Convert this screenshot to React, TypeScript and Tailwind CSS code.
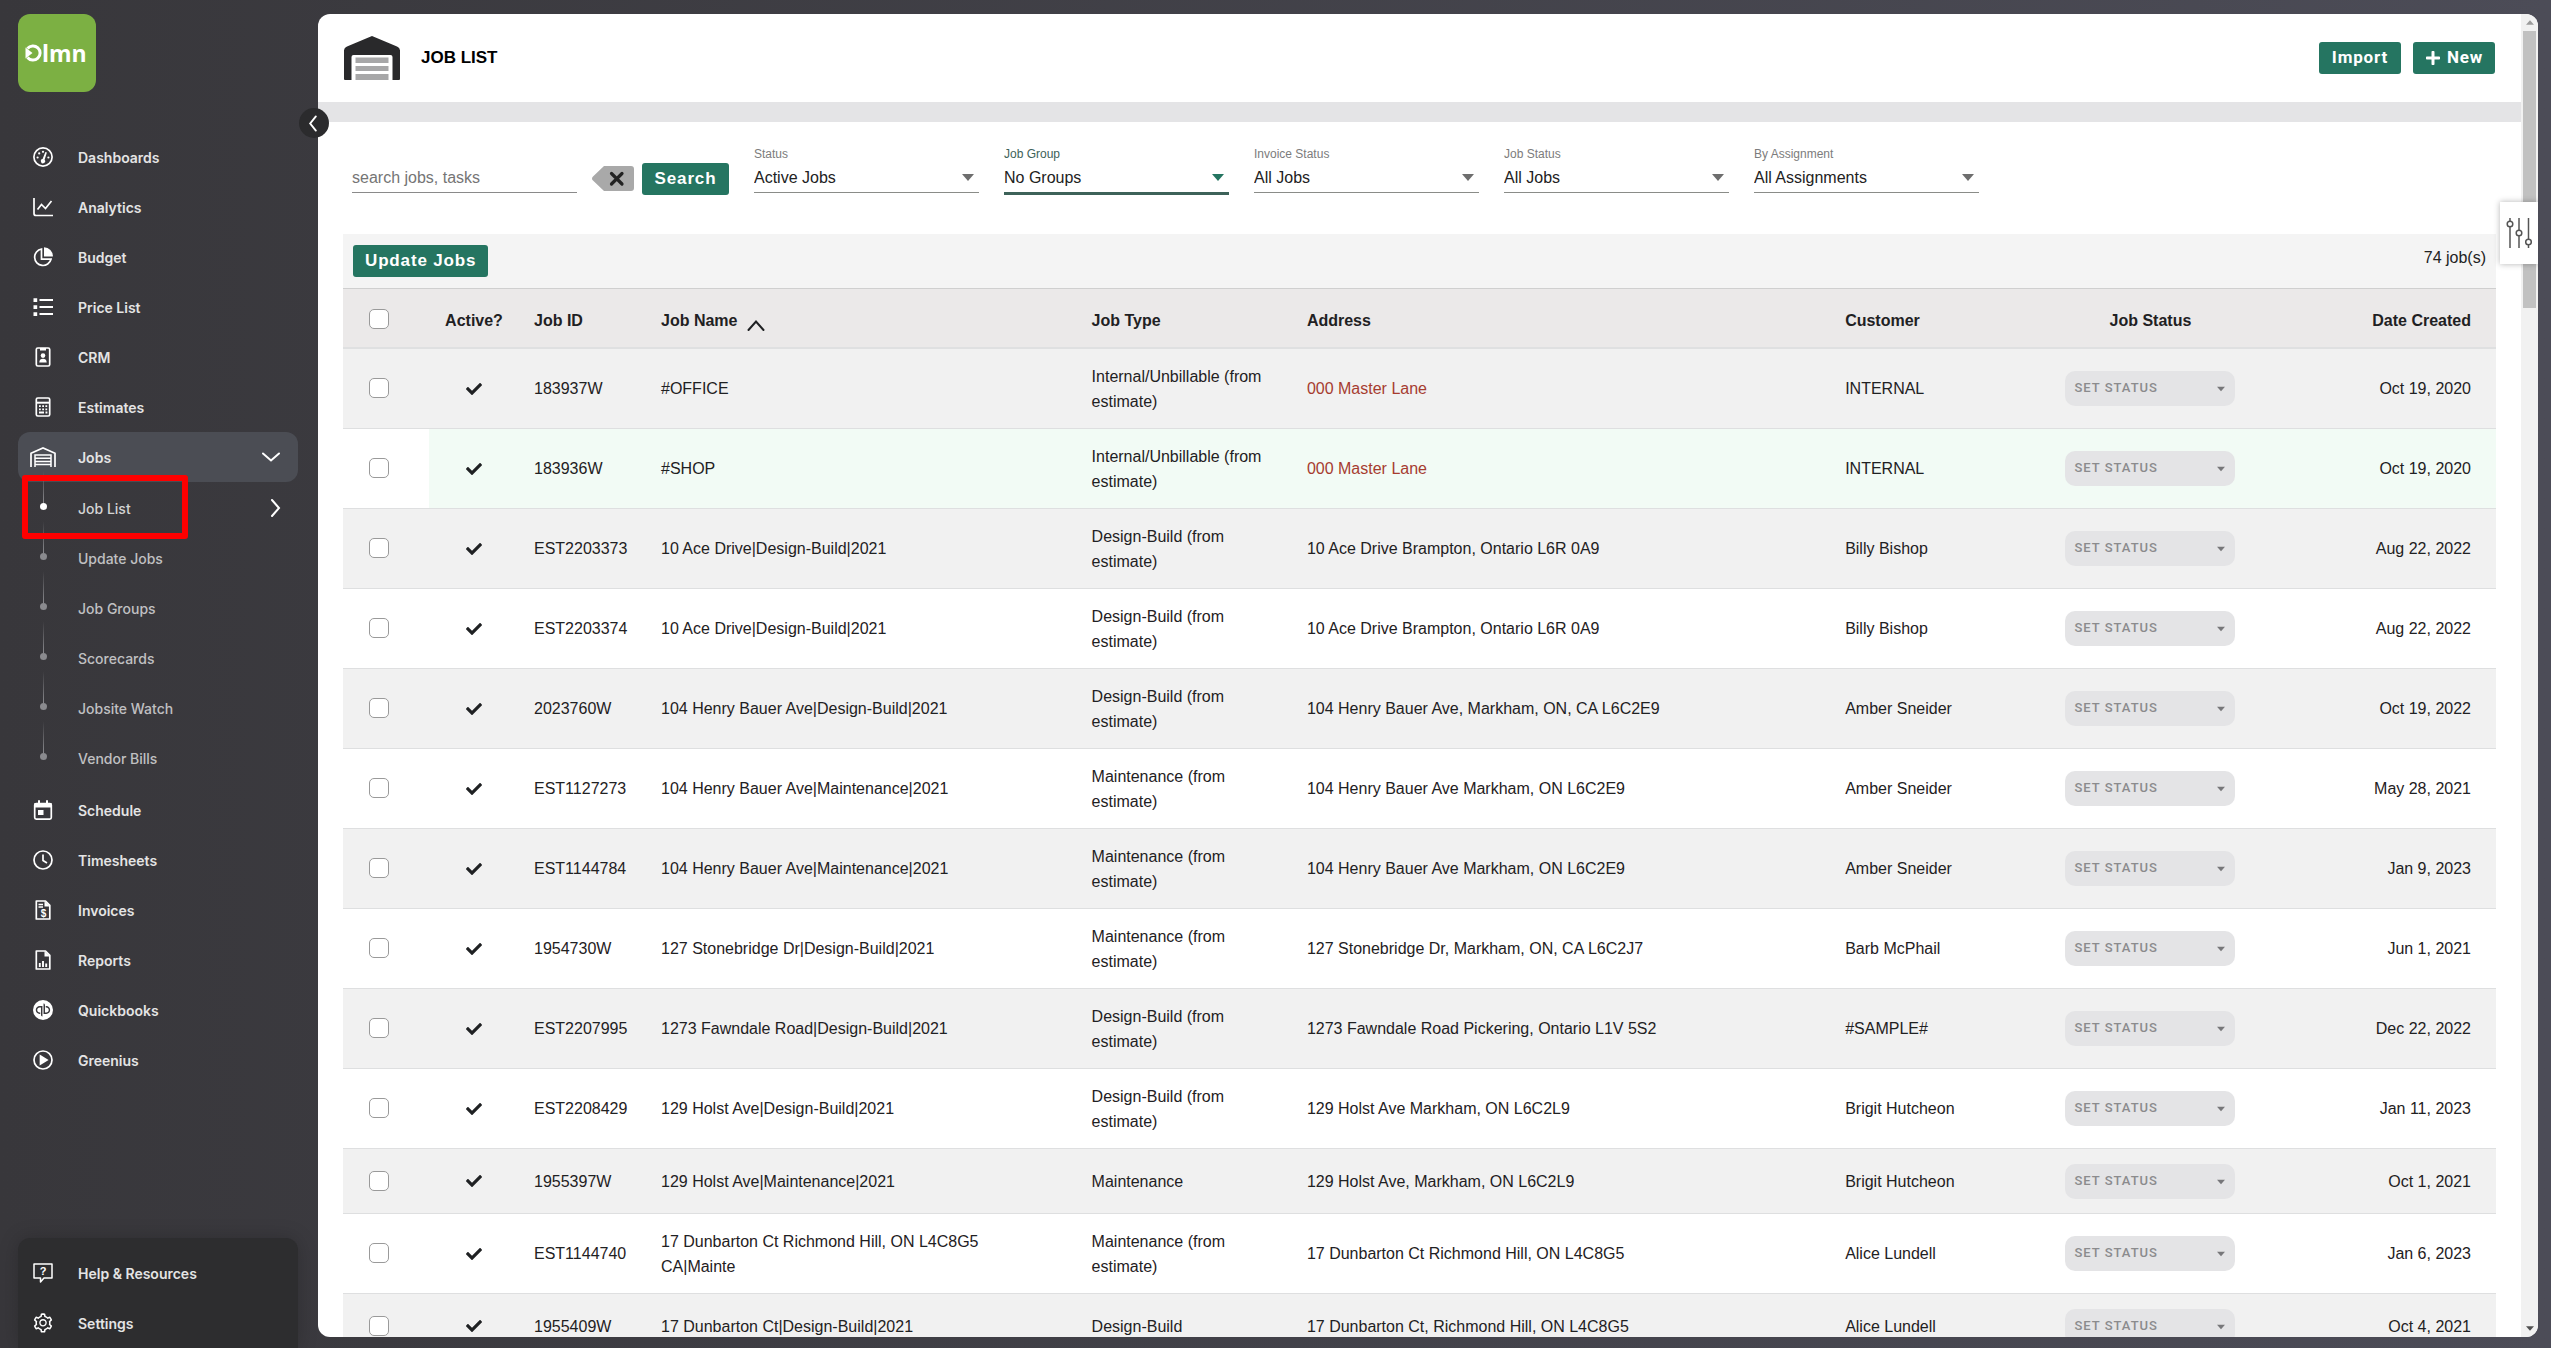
import React, { useState } from 'react';
import { SiQuickbooks } from 'react-icons/si';
import { AiOutlineSetting } from 'react-icons/ai';
import { FaCheck, FaPlus } from 'react-icons/fa';

interface Job {
  id: string;
  name: string;
  type: string;
  address: string;
  customer: string;
  created: string;
  missingAddress?: boolean;
}

const INTERNAL = 'Internal/Unbillable (from estimate)';
const DESIGN = 'Design-Build (from estimate)';
const MAINTENANCE = 'Maintenance (from estimate)';

const jobs: Job[] = [
  { id: '183937W', name: '#OFFICE', type: INTERNAL, address: '000 Master Lane', customer: 'INTERNAL', created: 'Oct 19, 2020', missingAddress: true },
  { id: '183936W', name: '#SHOP', type: INTERNAL, address: '000 Master Lane', customer: 'INTERNAL', created: 'Oct 19, 2020', missingAddress: true },
  { id: 'EST2203373', name: '10 Ace Drive|Design-Build|2021', type: DESIGN, address: '10 Ace Drive Brampton, Ontario L6R 0A9', customer: 'Billy Bishop', created: 'Aug 22, 2022' },
  { id: 'EST2203374', name: '10 Ace Drive|Design-Build|2021', type: DESIGN, address: '10 Ace Drive Brampton, Ontario L6R 0A9', customer: 'Billy Bishop', created: 'Aug 22, 2022' },
  { id: '2023760W', name: '104 Henry Bauer Ave|Design-Build|2021', type: DESIGN, address: '104 Henry Bauer Ave, Markham, ON, CA L6C2E9', customer: 'Amber Sneider', created: 'Oct 19, 2022' },
  { id: 'EST1127273', name: '104 Henry Bauer Ave|Maintenance|2021', type: MAINTENANCE, address: '104 Henry Bauer Ave Markham, ON L6C2E9', customer: 'Amber Sneider', created: 'May 28, 2021' },
  { id: 'EST1144784', name: '104 Henry Bauer Ave|Maintenance|2021', type: MAINTENANCE, address: '104 Henry Bauer Ave Markham, ON L6C2E9', customer: 'Amber Sneider', created: 'Jan 9, 2023' },
  { id: '1954730W', name: '127 Stonebridge Dr|Design-Build|2021', type: MAINTENANCE, address: '127 Stonebridge Dr, Markham, ON, CA L6C2J7', customer: 'Barb McPhail', created: 'Jun 1, 2021' },
  { id: 'EST2207995', name: '1273 Fawndale Road|Design-Build|2021', type: DESIGN, address: '1273 Fawndale Road Pickering, Ontario L1V 5S2', customer: '#SAMPLE#', created: 'Dec 22, 2022' },
  { id: 'EST2208429', name: '129 Holst Ave|Design-Build|2021', type: DESIGN, address: '129 Holst Ave Markham, ON L6C2L9', customer: 'Brigit Hutcheon', created: 'Jan 11, 2023' },
  { id: '1955397W', name: '129 Holst Ave|Maintenance|2021', type: 'Maintenance', address: '129 Holst Ave, Markham, ON L6C2L9', customer: 'Brigit Hutcheon', created: 'Oct 1, 2021' },
  { id: 'EST1144740', name: '17 Dunbarton Ct Richmond Hill, ON L4C8G5 CA|Mainte', type: MAINTENANCE, address: '17 Dunbarton Ct Richmond Hill, ON L4C8G5', customer: 'Alice Lundell', created: 'Jan 6, 2023' },
  { id: '1955409W', name: '17 Dunbarton Ct|Design-Build|2021', type: 'Design-Build', address: '17 Dunbarton Ct, Richmond Hill, ON L4C8G5', customer: 'Alice Lundell', created: 'Oct 4, 2021' },
];

const filters = [
  { id: 'status', label: 'Status', value: 'Active Jobs' },
  { id: 'group', label: 'Job Group', value: 'No Groups', focused: true },
  { id: 'invoice', label: 'Invoice Status', value: 'All Jobs' },
  { id: 'job-status', label: 'Job Status', value: 'All Jobs' },
  { id: 'assignment', label: 'By Assignment', value: 'All Assignments' },
];

const Svg = ({ children, className = 'size-5' }: { children: React.ReactNode; className?: string }) => (
  <svg viewBox="0 0 20 20" className={className} fill="none" stroke="currentColor" strokeWidth="1.7" aria-hidden="true">
    {children}
  </svg>
);

const GaugeIcon = () => (
  <Svg>
    <circle cx="10" cy="10" r="9.1" />
    <g fill="currentColor" stroke="none">
      <circle cx="4.6" cy="10.5" r="1.1" />
      <circle cx="6.2" cy="6.4" r="1.1" />
      <circle cx="10" cy="4.8" r="1.1" />
      <circle cx="15.4" cy="10.5" r="1.1" />
      <path d="M12.4 5l1.5.6-2.3 7.2a2.1 2.1 0 1 1-2-.7z" />
    </g>
  </Svg>
);

const AnalyticsIcon = () => (
  <Svg>
    <path d="M1 1v15.5a2 2 0 0 0 2 2h17" />
    <path d="M4.5 12.5l4-5 4 4 6-7.5" />
  </Svg>
);

const BudgetIcon = () => (
  <Svg>
    <path d="M8.5 2A8.3 8.3 0 1 0 18 12.200H8.500z" />
    <path d="M11 .3a9 9 0 0 1 8.900 9.200H11z" fill="currentColor" stroke="none" />
  </Svg>
);

const ListIcon = () => (
  <Svg>
    <path d="M6.500 3H20M6.500 10H20M6.500 17H20" strokeWidth="2" />
    <path d="M.5 1.200h3.700v3.700H.5zM.5 8.200h3.700v3.700H.5zM.5 15.200h3.700v3.700H.5z" fill="currentColor" stroke="none" />
  </Svg>
);

const CrmIcon = () => (
  <Svg>
    <rect x="3.300" y="1" width="13.400" height="18" rx="1.500" />
    <path d="M7 1h6v2.500H7zM6.300 15.500c0-2.700 1.700-3.700 3.700-3.700s3.700 1 3.700 3.700z" fill="currentColor" stroke="none" />
    <circle cx="10" cy="8.600" r="2.300" fill="currentColor" stroke="none" />
  </Svg>
);

const CalculatorIcon = () => (
  <Svg>
    <rect x="3.300" y="1" width="13.400" height="18" rx="1.500" />
    <path d="M3 5.700h14" strokeWidth="2" />
    <path d="M6 9.200h8.500M6 12.300h8.500" strokeDasharray="1.800 1.400" strokeWidth="1.800" />
    <path d="M6 15.500h5M12.500 15.500h1.900" strokeWidth="1.800" />
  </Svg>
);

const GarageIcon = () => (
  <svg viewBox="0 0 26 20" className="h-5 w-[26px]" fill="none" stroke="currentColor" strokeWidth="1.7" aria-hidden="true">
    <path d="M1 20V6.300L13 1l12 5.300V20" />
    <path d="M5 20V8h16v12M5 11.300h16M5 14.400h16M5 17.500h16" strokeWidth="1.5" />
  </svg>
);

const ScheduleIcon = () => (
  <Svg>
    <rect x="1.700" y="3.500" width="16.600" height="15.600" rx="1.500" />
    <path d="M1.500 3h17v4.500h-17zM5 .3h2V3H5zM13 .3h2V3h-2zM5 10h5.500v5H5z" fill="currentColor" stroke="none" />
  </Svg>
);

const ClockIcon = () => (
  <Svg>
    <circle cx="10" cy="10" r="9" />
    <path d="M10 4.500V10.500l4 2.500" />
  </Svg>
);

const InvoiceIcon = () => (
  <Svg>
    <path d="M3.300 1h9.200l4.300 4.300V19H3.300zM5.500 4.500h4.500M5.500 7h4.500" strokeLinejoin="round" />
    <path d="M11.500 1l5.500 5.500h-5.500z" fill="currentColor" stroke="none" />
    <text x="10.500" y="16.800" textAnchor="middle" fontSize="10" fontWeight="700" fontFamily="Liberation Sans, sans-serif" fill="currentColor" stroke="none">$</text>
  </Svg>
);

const ReportIcon = () => (
  <Svg>
    <path d="M3.300 1h9.200l4.300 4.300V19H3.300z" strokeLinejoin="round" />
    <path d="M11.500 1l5.500 5.500h-5.500z" fill="currentColor" stroke="none" />
    <path d="M6.800 17v-4M10 17v-6M13.200 17v-3.500" strokeWidth="1.9" />
  </Svg>
);

const PlayIcon = () => (
  <Svg>
    <circle cx="10" cy="10" r="9" />
    <path d="M7.500 6l6.500 4-6.500 4z" fill="currentColor" />
  </Svg>
);

const HelpIcon = () => (
  <Svg>
    <path d="M1 1h18v14h-8l-3.500 4v-4H1z" strokeLinejoin="round" strokeWidth="1.5" />
    <text x="10" y="12" textAnchor="middle" fontSize="11" fontWeight="700" fontFamily="Liberation Sans, sans-serif" fill="currentColor" stroke="none">?</text>
  </Svg>
);

const Chevron = ({ d, className }: { d: string; className: string }) => (
  <svg viewBox="0 0 18 18" className={className} fill="none" stroke="currentColor" strokeWidth="2" aria-hidden="true">
    <path d={d} strokeLinecap="round" />
  </svg>
);

const Caret = ({ className }: { className: string }) => (
  <svg viewBox="0 0 12 7" className={className} fill="currentColor" aria-hidden="true">
    <path d="M0 0h12L6 7z" />
  </svg>
);

const NavItem = ({ icon, label }: { icon: React.ReactNode; label: string }) => (
  <a href="#" className="flex h-[50px] items-center text-sm font-semibold text-[#e4e4e4]">
    <span className="flex w-[50px] justify-center text-white">{icon}</span>
    <span className="ml-[10px] pt-0.5">{label}</span>
  </a>
);

const SubItem = ({ label, active }: { label: string; active?: boolean }) => (
  <a href="#" className={`flex h-[50px] items-center text-sm font-medium ${active ? 'text-[#d4d4d4]' : 'text-[#c0c0c2]'}`}>
    <span className="flex h-full w-[50px] flex-col items-center pb-[23px]">
      <span className="-mt-3 w-px flex-1 bg-linear-to-b from-transparent to-[#8a8a8e]" />
      <span className={`size-[7px] rounded-full ${active ? 'bg-white' : 'bg-[#8a8a8e]'}`} />
    </span>
    <span className="ml-[10px] flex-1 pt-0.5">{label}</span>
    {active && <Chevron d="M6 1l7 8-7 8" className="mr-[14px] size-[18px] text-white" />}
  </a>
);

const Sidebar = ({ onCollapse }: { onCollapse: () => void }) => (
  <aside className="relative flex w-[318px] shrink-0 flex-col pl-[18px] pr-5 pt-[14px] font-[Inter,sans-serif]">
    <a href="#" aria-label="Home" className="flex size-[78px] items-center justify-center rounded-xl bg-[#7cb043] text-white">
      <svg viewBox="0 -10 70 44" className="h-11 w-[70px] overflow-visible" aria-hidden="true">
        <path d="M5.500 7.500A7.100 7.100 0 1 1 5.500 16.500" fill="none" stroke="#fff" strokeWidth="3" />
        <path d="M3.500 6.500l7 5.500-7 5.500z" fill="#fff" />
        <text x="20" y="21" fontFamily="Open Sans, sans-serif" fontWeight="700" fontSize="23" fill="#fff">lmn</text>
      </svg>
    </a>
    <button
      type="button"
      onClick={onCollapse}
      aria-label="Collapse menu"
      className="absolute right-[-11px] top-[108px] z-10 flex size-[30px] items-center justify-center rounded-full bg-[#2b2b2d] text-white"
    >
      <Chevron d="M11.500 1.500l-6 7.500 6 7.500" className="mr-0.5 size-[17px]" />
    </button>
    <nav className="mt-10">
      <NavItem icon={<GaugeIcon />} label="Dashboards" />
      <NavItem icon={<AnalyticsIcon />} label="Analytics" />
      <NavItem icon={<BudgetIcon />} label="Budget" />
      <NavItem icon={<ListIcon />} label="Price List" />
      <NavItem icon={<CrmIcon />} label="CRM" />
      <NavItem icon={<CalculatorIcon />} label="Estimates" />
      <div className="flex items-center justify-between rounded-xl bg-[#4b4d54] pr-[18px] text-white">
        <NavItem icon={<GarageIcon />} label="Jobs" />
        <Chevron d="M1 5.500l8 7 8-7" className="size-[18px]" />
      </div>
      <div className="relative pb-0.5 pt-px">
        <SubItem label="Job List" active />
        <SubItem label="Update Jobs" />
        <SubItem label="Job Groups" />
        <SubItem label="Scorecards" />
        <SubItem label="Jobsite Watch" />
        <SubItem label="Vendor Bills" />
        <div className="pointer-events-none absolute left-1 top-[-7px] h-16 w-[166px] rounded-[3px] border-[6px] border-[#fe0000]" />
      </div>
      <NavItem icon={<ScheduleIcon />} label="Schedule" />
      <NavItem icon={<ClockIcon />} label="Timesheets" />
      <NavItem icon={<InvoiceIcon />} label="Invoices" />
      <NavItem icon={<ReportIcon />} label="Reports" />
      <NavItem icon={<SiQuickbooks className="size-5" />} label="Quickbooks" />
      <NavItem icon={<PlayIcon />} label="Greenius" />
    </nav>
    <div className="mt-auto rounded-t-xl bg-[#2d2d2f] pt-[10px] shadow-[0_0_20px_rgba(0,0,0,0.2)]">
      <NavItem icon={<HelpIcon />} label="Help & Resources" />
      <NavItem icon={<AiOutlineSetting className="size-[22px]" />} label="Settings" />
    </div>
  </aside>
);

const GreenButton = ({ children, className = 'px-3' }: { children: React.ReactNode; className?: string }) => (
  <button type="button" className={`flex h-8 items-center justify-center gap-1.5 rounded-[3px] bg-[#257561] text-[17px] font-bold tracking-wider text-white ${className}`}>
    {children}
  </button>
);

const Checkbox = ({ label }: { label: string }) => (
  <input type="checkbox" aria-label={label} className="block size-5 appearance-none rounded-[5px] border border-[#9a9a9a] bg-white checked:bg-[#257561]" />
);

const FilterSelect = ({ id, label, value, focused }: { id: string; label: string; value: string; focused?: boolean }) => (
  <div className="w-[225px]">
    <label htmlFor={id} className={`block text-xs leading-4 ${focused ? 'text-[#3d6259]' : 'text-[#7c7c7c]'}`}>
      {label}
    </label>
    <div className={`relative flex items-start ${focused ? 'h-[33px] border-b-3 border-[#3d6259]' : 'h-[31px] border-b border-[#8a8c88]'}`}>
      <select id={id} className="h-8 w-full shrink-0 appearance-none bg-transparent text-[#222]">
        <option>{value}</option>
      </select>
      <Caret className={`pointer-events-none absolute right-[5px] top-3 h-[7px] w-3 ${focused ? 'text-[#257561]' : 'text-[#6e6e6e]'}`} />
    </div>
  </div>
);

const JobRow = ({ job, highlighted, striped }: { job: Job; highlighted: boolean; striped: boolean }) => {
  const cell = `pl-[15px] pt-[15px] pb-[14px] leading-[25px] ${highlighted ? 'bg-[#f2fbf5]' : ''}`;

  return (
    <tr className={`border-b border-[#dedfe0] ${striped ? 'bg-[#f1f1f1]' : 'bg-white'}`}>
      <td className="pl-[26px]">
        <Checkbox label={`Select ${job.id}`} />
      </td>
      <td className={`${cell} pr-[15px]`}>
        <FaCheck className="mx-auto size-4" aria-label="Active" />
      </td>
      <td className={cell}>{job.id}</td>
      <td className={`${cell} pr-10`}>{job.name}</td>
      <td className={`${cell} pr-[15px]`}>{job.type}</td>
      <td className={`${cell} pr-[15px] ${job.missingAddress ? 'text-[#a63c30]' : ''}`}>{job.address}</td>
      <td className={`${cell} pr-[15px]`}>{job.customer}</td>
      <td className={`${cell} pr-[15px]`}>
        <div className="relative mx-auto w-[170px]">
          <select
            aria-label={`Status of ${job.id}`}
            className="block h-[35px] w-full appearance-none rounded-[10px] bg-[#e4e4e6] px-[9px] pb-[2px] font-[Roboto,sans-serif] text-[13px] font-medium tracking-[1px] text-[#8b8b8d]"
          >
            <option>SET STATUS</option>
          </select>
          <Caret className="pointer-events-none absolute right-[10px] top-[15px] h-[6px] w-2 text-[#77777a]" />
        </div>
      </td>
      <td className={`${cell} pr-[25px] text-right`}>{job.created}</td>
    </tr>
  );
};

const JobTable = () => (
  <table className="w-full table-fixed border-collapse text-left text-[#1f2123]">
    <colgroup>
      <col className="w-[86px]" />
      <col className="w-[90px]" />
      <col className="w-[127px]" />
      <col className="w-[20%]" />
      <col className="w-[10%]" />
      <col className="w-[25%]" />
      <col className="w-[10%]" />
      <col className="w-[210px]" />
      <col />
    </colgroup>
    <thead>
      <tr className="h-[59px] border-b-2 border-t border-b-[#dfe0e1] border-t-[#cfcfcf] bg-[#ebe9e9]">
        <th className="pl-[26px] pt-0.5">
          <Checkbox label="Select all jobs" />
        </th>
        <th className="pt-1.5 text-center">Active?</th>
        <th className="pl-[15px] pt-1.5">Job ID</th>
        <th className="pl-[15px] pt-1.5">
          <button type="button" className="flex items-center gap-[10px] font-bold">
            Job Name
            <Chevron d="M1.500 14L9 5.500l7.500 8.500" className="mt-2 size-[18px]" />
          </button>
        </th>
        <th className="pl-[15px] pt-1.5">Job Type</th>
        <th className="pl-[15px] pt-1.5">Address</th>
        <th className="pl-[15px] pt-1.5">Customer</th>
        <th className="pt-1.5 text-center">Job Status</th>
        <th className="pr-[25px] pt-1.5 text-right">Date Created</th>
      </tr>
    </thead>
    <tbody>
      {jobs.map((job, index) => (
        <JobRow key={job.id} job={job} striped={index % 2 === 0} highlighted={index === 1} />
      ))}
    </tbody>
  </table>
);

const Scrollbar = () => (
  <div className="flex w-[17px] shrink-0 flex-col items-center bg-[#f1f1f1] pb-[6px]">
    <Caret className="my-[6px] h-[5px] w-2 rotate-180 text-[#9b9b9b]" />
    <div className="h-[277px] w-[13px] bg-[#c1c1c1]" />
    <Caret className="mt-auto h-[5px] w-2 text-[#505050]" />
  </div>
);

export default function App() {
  const [collapsed, setCollapsed] = useState(false);
  const [searchTerm, setSearchTerm] = useState('');

  return (
    <div className="flex h-screen overflow-hidden bg-linear-to-r from-[#38373b] to-[#4c4c57] font-['Liberation_Sans',Arial,sans-serif] text-base">
      {!collapsed && <Sidebar onCollapse={() => setCollapsed(true)} />}

      <main className="relative mb-[11px] mr-[13px] mt-[14px] flex min-w-0 flex-1 overflow-hidden rounded-xl bg-white">
        <div className="min-w-0 flex-1 overflow-hidden">
          <header className="flex h-[88px] items-center px-[26px]">
            <svg viewBox="0 0 56 44" className="h-11 w-14" aria-hidden="true">
              <path d="M28 0L53 10.500a4.500 4.500 0 0 1 3 4.500v28a1 1 0 0 1-1 1h-6.500V21a2 2 0 0 0-2-2h-37a2 2 0 0 0-2 2v23H1a1 1 0 0 1-1-1V15a4.500 4.500 0 0 1 3-4.500z" fill="#29292b" />
              <path d="M11.500 21.500h33V27h-33zM11.500 30h33v5h-33zM11.500 38h33v6h-33z" fill="#a7a7a8" />
            </svg>
            <h1 className="ml-[21px] text-[17px] font-bold text-black">JOB LIST</h1>
            <div className="ml-auto flex gap-3 font-[Roboto,sans-serif]">
              <GreenButton className="w-[82px]">Import</GreenButton>
              <GreenButton className="w-[82px]">
                <FaPlus className="size-4" />
                New
              </GreenButton>
            </div>
          </header>
          <div className="h-5 bg-[#e4e4e6]" />

          <section className="flex h-28 items-start pl-[34px] pt-6">
            <form className="mt-[17px] flex items-start" onSubmit={(e) => e.preventDefault()}>
              <input
                type="text"
                aria-label="Search jobs"
                placeholder="search jobs, tasks"
                value={searchTerm}
                onChange={(e) => setSearchTerm(e.target.value)}
                className="h-[30px] w-[225px] border-b border-[#8a8a8a] text-[#222] outline-none placeholder:text-[#757575]"
              />
              <button type="button" aria-label="Clear search" onClick={() => setSearchTerm('')} className="ml-[15px] mt-[3px]">
                <svg viewBox="0 0 42 25" className="h-[25px] w-[42px]">
                  <path d="M12 0h27a3 3 0 0 1 3 3v19a3 3 0 0 1-3 3H12L1 14.500a2.500 2.500 0 0 1 0-4z" fill="#a9a9a9" />
                  <path d="M19.500 7.500l10.500 10.500M30 7.500L19.500 18" stroke="#222" strokeWidth="3.2" strokeLinecap="round" />
                </svg>
              </button>
              <GreenButton className="ml-2 w-[87px]">Search</GreenButton>
            </form>
            <div className="ml-[25px] flex gap-[25px]">
              {filters.map((filter) => (
                <FilterSelect key={filter.id} {...filter} />
              ))}
            </div>
          </section>

          <section className="mx-[25px]">
            <div className="flex h-[54px] items-center justify-between bg-[#f4f4f4] px-[10px]">
              <GreenButton>Update Jobs</GreenButton>
              <span className="pb-1.5 text-[#222]">74 job(s)</span>
            </div>
            <JobTable />
          </section>
        </div>
        <Scrollbar />

        <button
          type="button"
          aria-label="Table settings"
          className="absolute right-0 top-[188px] flex h-[62px] w-[38px] items-center justify-center bg-white shadow-[0_0_6px_rgba(0,0,0,0.3)]"
        >
          <svg viewBox="0 0 26 30" className="h-[30px] w-[26px]" fill="#fff" stroke="#555" strokeWidth="1.5">
            <path d="M4 0v30M13 0v30M22.500 0v30" />
            <circle cx="4" cy="6" r="2.800" />
            <circle cx="13" cy="15" r="2.800" />
            <circle cx="22.500" cy="24" r="2.800" />
          </svg>
        </button>
      </main>
    </div>
  );
}
